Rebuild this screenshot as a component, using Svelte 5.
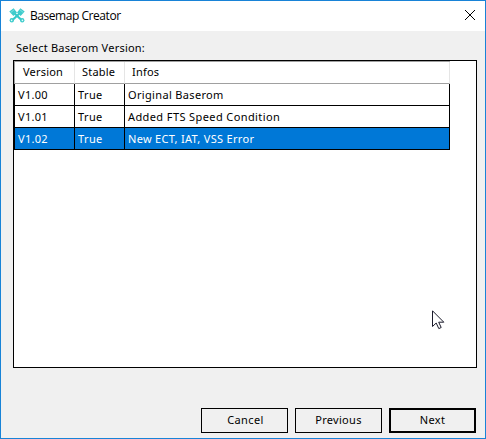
<script>
  const rows = [
    { version: 'V1.00', stable: 'True', info: 'Original Baserom', spacing: 0.34 },
    { version: 'V1.01', stable: 'True', info: 'Added FTS Speed Condition', spacing: 0.4 },
    { version: 'V1.02', stable: 'True', info: 'New ECT, IAT, VSS Error', spacing: 0.31 }
  ];
  let selected = $state(2);
</script>

<div class="window">
  <header>
    <svg class="logo" width="16" height="15" viewBox="0 0 16 15">
      <g stroke="#35c9c9" stroke-width="2.2" fill="none">
        <path d="M5 5 L12.5 12 M11 5 L3.5 12" />
      </g>
      <g fill="#3fcccc">
        <path d="M0.3 3.6 L4.6 0.2 L8 4.4 L4.4 8 Z M15.7 3.6 L11.4 0.2 L8 4.4 L11.6 8 Z" />
        <circle cx="2.8" cy="12.2" r="2.2" /><circle cx="13.2" cy="12.2" r="2.2" />
      </g>
      <path d="M1.6 4.6 L5.6 1.4 M14.4 4.6 L10.4 1.4" stroke="#8fe2e2" stroke-width=".8" />
      <g fill="#e4fafa"><circle cx="2.6" cy="12.4" r=".8" /><circle cx="13.4" cy="12.4" r=".8" /></g>
    </svg>
    <h1>Basemap Creator</h1>
    <svg class="close" width="10" height="10" viewBox="0 0 10 10"><path d="M0 0 L10 10 M10 0 L0 10" stroke="#000" stroke-width="1" /></svg>
  </header>
  <main>
    <div class="label">Select Baserom Version:</div>
    <div class="list">
      <div class="row head"><span>Version</span><span>Stable</span><span>Infos</span></div>
      {#each rows as row, i}
        <div class="row" class:selected={i === selected}>
          <span>{row.version}</span><span>{row.stable}</span><span style:letter-spacing="{row.spacing}px">{row.info}</span>
        </div>
      {/each}
    </div>
    <footer>
      <button class="cancel">Cancel</button><button>Previous</button><button class="default">Next</button>
    </footer>
  </main>
  <svg class="cursor" width="13" height="20" viewBox="0 0 13 20"><path d="M.5 .8 V16.5 L4.2 13 L6.8 18.6 L9.2 17.5 L6.7 12.2 H11.8 Z" fill="#fff" stroke="#1b1b2b" stroke-width="1" /></svg>
</div>

<style>
  :global(body) { margin: 0; }
  .window {
    position: relative; box-sizing: border-box; width: 486px; height: 439px;
    border: 1px solid #1883d7; background: #f0f0f0; color: #000;
    display: flex; flex-direction: column;
    font: 11px/16px "Noto Sans", "Open Sans", sans-serif; letter-spacing: .4px;
  }
  header { box-sizing: border-box; height: 30px; background: #fff; display: flex; align-items: center; padding: 0 10px 0 8px; }
  .logo { margin: 0 5px 1px 0; }
  .close { margin-bottom: 2px; }
  h1 { margin: 0; font: 12px/16px "Open Sans", sans-serif; letter-spacing: -.45px; flex: 1; }
  main { flex: 1; display: flex; flex-direction: column; padding: 9px 8px 5px 12px; }
  .label { height: 20px; padding-left: 3px; letter-spacing: .22px; }
  .list { box-sizing: border-box; width: 464px; height: 308px; border: 1px solid #000; background: #fff; }
  .row { display: grid; grid-template-columns: 61px 50px 325px; height: 22px; width: 436px; }
  .row span { box-sizing: border-box; border: solid #000; border-width: 0 1px 1px 0; padding: 3px 0 0 3px; white-space: nowrap; }
  .row span:first-child { border-left-width: 1px; letter-spacing: .3px; }
  .row.head { border-top: 1px solid #a0a0a0; }
  .row.head span { border-color: #e5e5e5; border-bottom-color: #a0a0a0; padding: 2px 0 0 7px; letter-spacing: .2px; }
  .row.head span:first-child { border-left-color: #a0a0a0; padding-left: 8px; }
  .selected { background: #0078d7; color: #fff; }
  footer { display: flex; justify-content: flex-end; gap: 7px; margin-top: auto; padding-right: 1px; }
  button { width: 87px; height: 25px; box-sizing: border-box; border: 1px solid #000; background: #f0f0f0; padding: 0 0 2px; font: inherit; letter-spacing: .3px; color: #000; }
  .cancel { padding-left: 2px; letter-spacing: .4px; }
  .default { border-width: 2px; letter-spacing: .4px; }
  .cursor { position: absolute; left: 431px; top: 309px; }
</style>
